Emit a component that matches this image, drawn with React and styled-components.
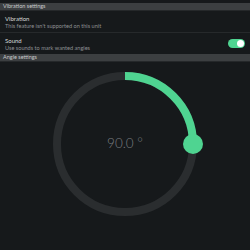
import React from "react";
import styled, { createGlobalStyle } from "styled-components";

const Global = createGlobalStyle`
  html, body { margin: 0; padding: 0; background: #16191b; }
  body { font-family: Lato, "Noto Sans", sans-serif; }
`;

const Page = styled.div`
  width: 250px;
  height: 250px;
  background: #16191b;
  display: flex;
  flex-direction: column;
  padding-top: 3px;
  box-sizing: border-box;
  overflow: hidden;
`;

const SectionHeader = styled.div`
  height: 7px;
  flex: none;
  background: #3c3f41;
  color: #c9cbcc;
  font-size: 5.5px;
  line-height: 7px;
  padding-left: 3px;
  border-bottom: 1px solid #25282a;
`;

const Row = styled.div`
  display: flex;
  flex: none;
  align-items: center;
  justify-content: space-between;
  height: 21px;
  padding: 0 5px;
  border-bottom: ${(p) => (p.$divider ? "1px solid #26292b" : "none")};
`;

const RowText = styled.div`
  display: flex;
  flex-direction: column;
  gap: 0px;
`;

const Title = styled.div`
  font-size: 6px;
  color: #d8d9da;
  line-height: 7px;
`;

const Subtitle = styled.div`
  font-size: 5.6px;
  color: #8d9093;
  line-height: 7px;
`;

const Toggle = styled.div`
  width: 17px;
  height: 9px;
  border-radius: 5px;
  background: #4fd491;
  display: flex;
  align-items: center;
  justify-content: flex-end;
  padding: 0 1px;
  box-sizing: border-box;
`;

const ToggleKnob = styled.div`
  width: 7px;
  height: 7px;
  border-radius: 50%;
  background: #ffffff;
`;

const DialArea = styled.div`
  flex: 1;
  display: flex;
  justify-content: center;
  padding-top: 10px;
`;

const Dial = styled.div`
  position: relative;
  width: 160px;
  height: 146px;
`;

const DialValue = styled.div`
  position: absolute;
  left: 0;
  right: 0;
  top: 63px;
  text-align: center;
  font-size: 13.5px;
  font-weight: 300;
  color: #7b7e80;
  line-height: 16px;
`;

export default function App() {
  const cx = 80, cy = 72, r = 68;
  return (
    <Page>
      <Global />
      <SectionHeader>Vibration settings</SectionHeader>
      <Row $divider>
        <RowText>
          <Title>Vibration</Title>
          <Subtitle>This feature isn't supported on this unit</Subtitle>
        </RowText>
      </Row>
      <Row>
        <RowText>
          <Title>Sound</Title>
          <Subtitle>Use sounds to mark wanted angles</Subtitle>
        </RowText>
        <Toggle>
          <ToggleKnob />
        </Toggle>
      </Row>
      <SectionHeader>Angle settings</SectionHeader>
      <DialArea>
        <Dial>
          <svg width="160" height="146" viewBox="0 0 160 146">
            <circle cx={cx} cy={cy} r={r} fill="none" stroke="#2a2d2f" strokeWidth="8" />
            <path
              d={`M ${cx} ${cy - r} A ${r} ${r} 0 0 1 ${cx + r} ${cy}`}
              fill="none"
              stroke="#4fd491"
              strokeWidth="8"
            />
            <circle cx={cx + r} cy={cy} r="10" fill="#4fd491" />
          </svg>
          <DialValue>90.0 °</DialValue>
        </Dial>
      </DialArea>
    </Page>
  );
}
